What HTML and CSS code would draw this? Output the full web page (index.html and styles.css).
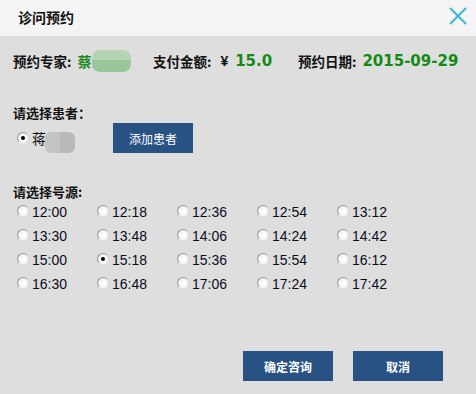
FILE: index.html
```html
<!DOCTYPE html>
<html lang="zh">
<head>
<meta charset="utf-8">
<title>诊问预约</title>
<link rel="stylesheet" href="styles.css">
</head>
<body>
<div class="dialog">
  <div class="header">
    <span class="title">诊问预约</span>
    <svg class="close" width="18" height="18" viewBox="0 0 18 18"><path d="M1 1 L17 17 M17 1 L1 17" stroke="#3bb6d8" stroke-width="2" fill="none"/></svg>
  </div>
  <div class="content">
    <div class="info">
      <div class="grp g1"><span class="lbl">预约专家:</span><span class="name">蔡</span><span class="blob green"></span></div>
      <div class="grp g2"><span class="lbl">支付金额:</span><span class="yen">¥</span><span class="val">15.0</span></div>
      <div class="grp g3"><span class="lbl">预约日期:</span><span class="val">2015-09-29</span></div>
    </div>
    <div class="section-label first">请选择患者：</div>
    <div class="patient-row">
      <div class="patient"><span class="radio checked"></span><span class="pname">蒋</span><span class="blob gray"></span></div>
      <button class="btn add">添加患者</button>
    </div>
    <div class="section-label second">请选择号源:</div>
    <div class="slots">
      <label class="slot"><span class="radio"></span>12:00</label>
      <label class="slot"><span class="radio"></span>12:18</label>
      <label class="slot"><span class="radio"></span>12:36</label>
      <label class="slot"><span class="radio"></span>12:54</label>
      <label class="slot"><span class="radio"></span>13:12</label>
      <label class="slot"><span class="radio"></span>13:30</label>
      <label class="slot"><span class="radio"></span>13:48</label>
      <label class="slot"><span class="radio"></span>14:06</label>
      <label class="slot"><span class="radio"></span>14:24</label>
      <label class="slot"><span class="radio"></span>14:42</label>
      <label class="slot"><span class="radio"></span>15:00</label>
      <label class="slot"><span class="radio checked"></span>15:18</label>
      <label class="slot"><span class="radio"></span>15:36</label>
      <label class="slot"><span class="radio"></span>15:54</label>
      <label class="slot"><span class="radio"></span>16:12</label>
      <label class="slot"><span class="radio"></span>16:30</label>
      <label class="slot"><span class="radio"></span>16:48</label>
      <label class="slot"><span class="radio"></span>17:06</label>
      <label class="slot"><span class="radio"></span>17:24</label>
      <label class="slot"><span class="radio"></span>17:42</label>
    </div>
    <div class="actions">
      <button class="btn big">确定咨询</button>
      <button class="btn big">取消</button>
    </div>
  </div>
</div>
</body>
</html>
```
FILE: styles.css
```css
html, body {
  margin: 0;
  padding: 0;
  background: #dedede;
}
.dialog {
  width: 476px;
  height: 394px;
  background: #dedede;
  font-family: "Noto Sans CJK SC", "Liberation Sans", sans-serif;
  color: #111;
  overflow: hidden;
}
.header {
  height: 36px;
  background: #f4f4f4;
  display: flex;
  align-items: center;
  justify-content: space-between;
  padding: 0 9px 0 18px;
}
.title {
  font-size: 14px;
  font-weight: bold;
  line-height: 20px;
  margin-top: -2px;
}
.close {
  margin-top: -4px;
}
.content {
  padding-left: 13px;
}
.info {
  display: flex;
  align-items: center;
  height: 22px;
  margin-top: 14px;
}
.grp {
  display: flex;
  align-items: center;
  height: 22px;
}
.g1 { width: 140px; }
.g2 { width: 145px; }
.lbl {
  font-size: 13.5px;
  font-weight: bold;
  line-height: 20px;
}
.name {
  font-size: 14px;
  font-weight: bold;
  color: #1f8a1f;
  margin-left: 6px;
  line-height: 20px;
}
.blob {
  display: inline-block;
  border-radius: 8px;
  filter: blur(0.6px);
}
.blob.green {
  width: 39px;
  height: 22px;
  margin-left: 1px;
  background: linear-gradient(#b6d4b4 0%, #b6d4b4 45%, #9bc699 45%, #9bc699 100%);
}
.yen {
  font-family: "Liberation Sans", sans-serif;
  font-weight: bold;
  font-size: 14px;
  margin-left: 9px;
}
.val {
  font-family: "DejaVu Sans", sans-serif;
  font-weight: bold;
  font-size: 15px;
  color: #158a15;
  margin-left: 7px;
  line-height: 20px;
}
.g3 .val {
  margin-left: 6px;
}
.section-label {
  font-size: 13px;
  font-weight: bold;
  line-height: 20px;
}
.section-label.first {
  margin-top: 31px;
}
.section-label.second {
  margin-top: 31px;
  line-height: 16px;
}
.patient-row {
  display: flex;
  align-items: flex-start;
  height: 30px;
}
.patient {
  display: flex;
  align-items: center;
  box-sizing: border-box;
  width: 100px;
  padding-left: 4px;
  margin-top: 4px;
  height: 22px;
}
.pname {
  font-size: 14px;
  margin-left: 3px;
  line-height: 20px;
}
.blob.gray {
  width: 30px;
  height: 21px;
  margin-top: 8px;
  margin-left: -1px;
  border-radius: 6px;
  background: linear-gradient(90deg, #c4c4c4 0%, #c4c4c4 50%, #b9b9b9 50%, #b9b9b9 100%);
}
.btn {
  border: none;
  background: #285184;
  color: #fff;
  font-family: "Noto Sans CJK SC", sans-serif;
  font-size: 12px;
  padding: 0;
  cursor: pointer;
}
.btn.add {
  width: 80px;
  height: 30px;
}
.radio {
  display: inline-block;
  box-sizing: border-box;
  width: 12px;
  height: 12px;
  border-radius: 50%;
  border: 1px solid #9a9a9a;
  border-right-color: #d8d8d8;
  border-bottom-color: #e8e8e8;
  background: radial-gradient(circle at 60% 60%, #ffffff 0%, #f4f4f4 60%, #dcdcdc 100%);
  position: relative;
  flex: none;
}
.radio.checked::after {
  content: "";
  position: absolute;
  left: 3px;
  top: 3px;
  width: 4px;
  height: 4px;
  border-radius: 50%;
  background: #000;
}
.slots {
  display: grid;
  grid-template-columns: repeat(5, 80px);
  grid-auto-rows: 24px;
  padding-left: 4px;
}
.slot {
  display: flex;
  align-items: center;
  font-family: "Liberation Sans", sans-serif;
  font-size: 14px;
  color: #0d0d1a;
}
.slot .radio {
  margin-right: 3px;
  margin-top: -2px;
}
.actions {
  display: flex;
  justify-content: flex-end;
  gap: 20px;
  padding-right: 33px;
  margin-top: 55px;
}
.btn.big {
  width: 90px;
  height: 30px;
  font-weight: bold;
}
```
